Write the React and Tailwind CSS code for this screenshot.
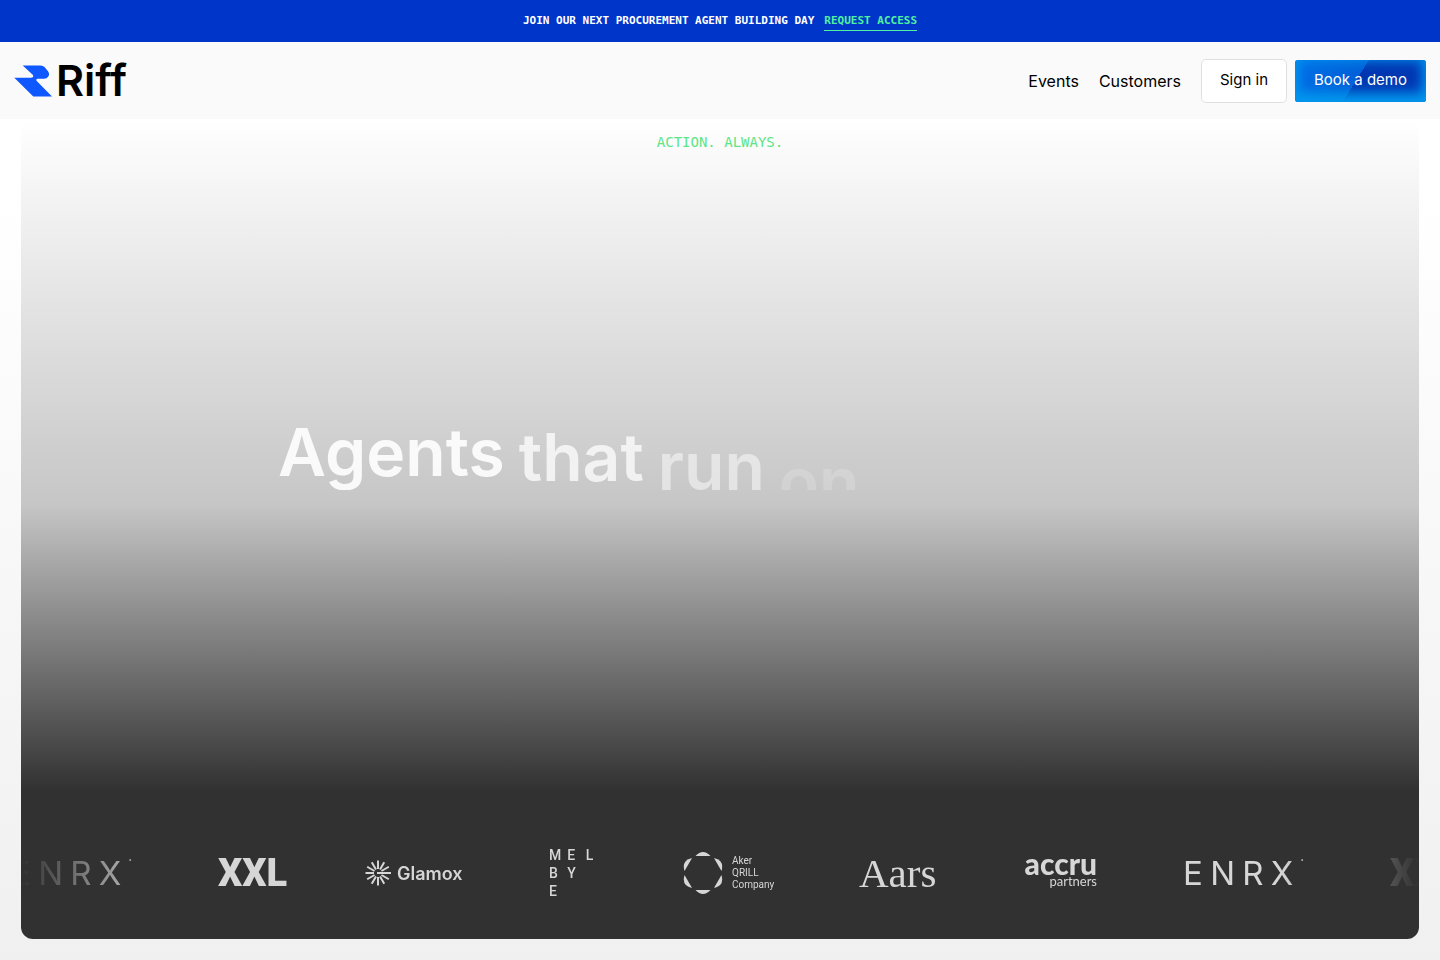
const NAV_LINKS = ["Events", "Customers"];

// reveal progress of each headline word, 0 = hidden, 1 = settled
const HEADLINE = [
  { word: "Agents", progress: 1, opacity: 0.9 },
  { word: "that", progress: 0.93, opacity: 0.75 },
  { word: "run", progress: 0.8, opacity: 0.5 },
  { word: "on", progress: 0.58, opacity: 0.18 },
];

const PARTNERS = [Enrx, Xxl, Glamox, Melbye, AkerQrill, Aars, Accru, Enrx, Xxl];

export default function App() {
  return (
    <div className="flex min-h-screen flex-col bg-linear-to-b from-white from-20% to-[#f0f0f0] font-['Inter',sans-serif] text-black">
      <Banner />
      <Header />
      <main className="flex grow flex-col px-[21px] pb-[21px]">
        <Hero />
      </main>
    </div>
  );
}

function Banner() {
  return (
    <div className="flex h-[42px] items-center justify-center gap-2.5 bg-[#0035c9] font-['DejaVu_Sans_Mono',monospace] text-[11px] font-bold text-white uppercase">
      <p>Join our next procurement agent building day</p>
      <a href="#access" className="border-b border-[#50f0a0] pt-0.5 pb-px text-[#50f0a0]">
        Request access
      </a>
    </div>
  );
}

function Header() {
  return (
    <header className="flex h-[77px] items-center justify-between bg-[#fafafa] px-3.5">
      <a href="#home" className="flex items-center gap-1" aria-label="Riff">
        <svg className="h-8 w-[38px]" viewBox="0 0 38 32" fill="#0f57ff">
          <path d="M8.700 .5H26.500Q29 .5 30.500 2L34 6.200Q36 9 34.300 11.500Q33 13.800 30 13.800H23.500Q21.500 14.300 22.500 15.800L38 31.500H19.300L.3 12.800H16.700Q20.500 12.300 18.700 9.800Z" />
        </svg>
        <span className="text-[43px] leading-none font-semibold">Riff</span>
      </a>
      <div className="flex items-center gap-2">
        <nav className="mr-3 flex gap-5">
          {NAV_LINKS.map((label) => (
            <a key={label} href={`#${label.toLowerCase()}`}>
              {label}
            </a>
          ))}
        </nav>
        <button type="button" className="h-11 rounded-[5px] border border-[#e0e0e0] bg-white px-[18px] text-[15px]">
          Sign in
        </button>
        <button
          type="button"
          className="h-[42px] rounded-[3px] bg-[linear-gradient(122deg,#0070e8_0%,#0060d8_47%,#0035b0_47%,#0038b4_100%)] px-[19px] text-[15px] text-white shadow-[inset_0_0_14px_#0090ec,inset_0_-8px_14px_#00a0f0]"
        >
          Book a demo
        </button>
      </div>
    </header>
  );
}

function Hero() {
  return (
    <section className="flex grow flex-col items-center overflow-hidden rounded-xl bg-[linear-gradient(to_bottom,#ffffff_0%,#c6c6c6_47%,#313131_82%)]">
      <p className="pt-3 font-['DejaVu_Sans_Mono',monospace] text-sm leading-[22px] text-[#5be584]">ACTION. ALWAYS.</p>
      <div className="flex w-full max-w-[884px] grow items-center pb-14">
        <h1 className="flex h-[76px] gap-3.5 overflow-hidden text-[66px] leading-[76px] font-semibold text-white">
          {HEADLINE.map(({ word, progress, opacity }) => (
            <span key={word} style={{ opacity, transform: `translateY(${Math.round((1 - progress) * 70)}px)` }}>
              {word}
            </span>
          ))}
        </h1>
      </div>
      <div className="w-full overflow-hidden py-10 [mask-image:linear-gradient(to_right,transparent,black_10%,black_90%,transparent)]">
        <ul className="-ml-2.5 flex h-[52px] items-center gap-[86px] text-[#d6d6d6]">
          {PARTNERS.map((Logo, i) => (
            <li key={i} className="shrink-0">
              <Logo />
            </li>
          ))}
        </ul>
      </div>
    </section>
  );
}

function Enrx() {
  return (
    <div className="flex w-[121px] justify-between text-[33px] leading-none">
      <span>E</span>
      <span>N</span>
      <span>R</span>
      <span>X</span>
      <span className="text-[6px]">•</span>
    </div>
  );
}

function Xxl() {
  return <div className="w-[61px] font-['Roboto',sans-serif] text-[38px] leading-none font-black">XXL</div>;
}

function Glamox() {
  return (
    <div className="flex w-[98px] items-center gap-1.5">
      <svg className="size-[26px] shrink-0" viewBox="-13 -13 26 26" stroke="currentColor" strokeWidth="2">
        {[0, 30, 60, 90, 120, 150, 180, 210, 240, 270, 300, 330].map((deg) => (
          <path key={deg} d={deg === 90 ? "M0 1V-13" : "M0 -4V-12.500"} transform={`rotate(${deg})`} />
        ))}
      </svg>
      <span className="text-[18px] font-semibold">Glamox</span>
    </div>
  );
}

function Melbye() {
  return (
    <div className="grid w-[47px] grid-cols-3 gap-x-2 font-['Roboto',sans-serif] text-sm leading-[18px] font-medium">
      {"MELBY".split("").map((letter) => (
        <span key={letter}>{letter}</span>
      ))}
      <span className="col-start-1">E</span>
    </div>
  );
}

function AkerQrill() {
  return (
    <div className="flex w-[91px] items-center gap-2">
      <svg className="size-[42px] shrink-0" viewBox="-21 -21 42 42" fill="currentColor">
        {[0, 60, 120, 180, 240, 300].map((deg) => (
          <path key={deg} d="M-7.500 -17Q0 -25 7.500 -17Z" transform={`rotate(${deg})`} />
        ))}
      </svg>
      <p className="font-['Roboto',sans-serif] text-[10px] leading-3">
        Aker
        <br />
        QRILL
        <br />
        Company
      </p>
    </div>
  );
}

function Aars() {
  return <div className="w-[77px] font-['Liberation_Serif',serif] text-[41px] leading-none">Aars</div>;
}

function Accru() {
  return (
    <div className="w-[75px] pb-1 text-right font-['Lato',sans-serif]">
      <p className="text-[30px] leading-5 font-black">accru</p>
      <p className="text-[13px] leading-4">partners</p>
    </div>
  );
}
